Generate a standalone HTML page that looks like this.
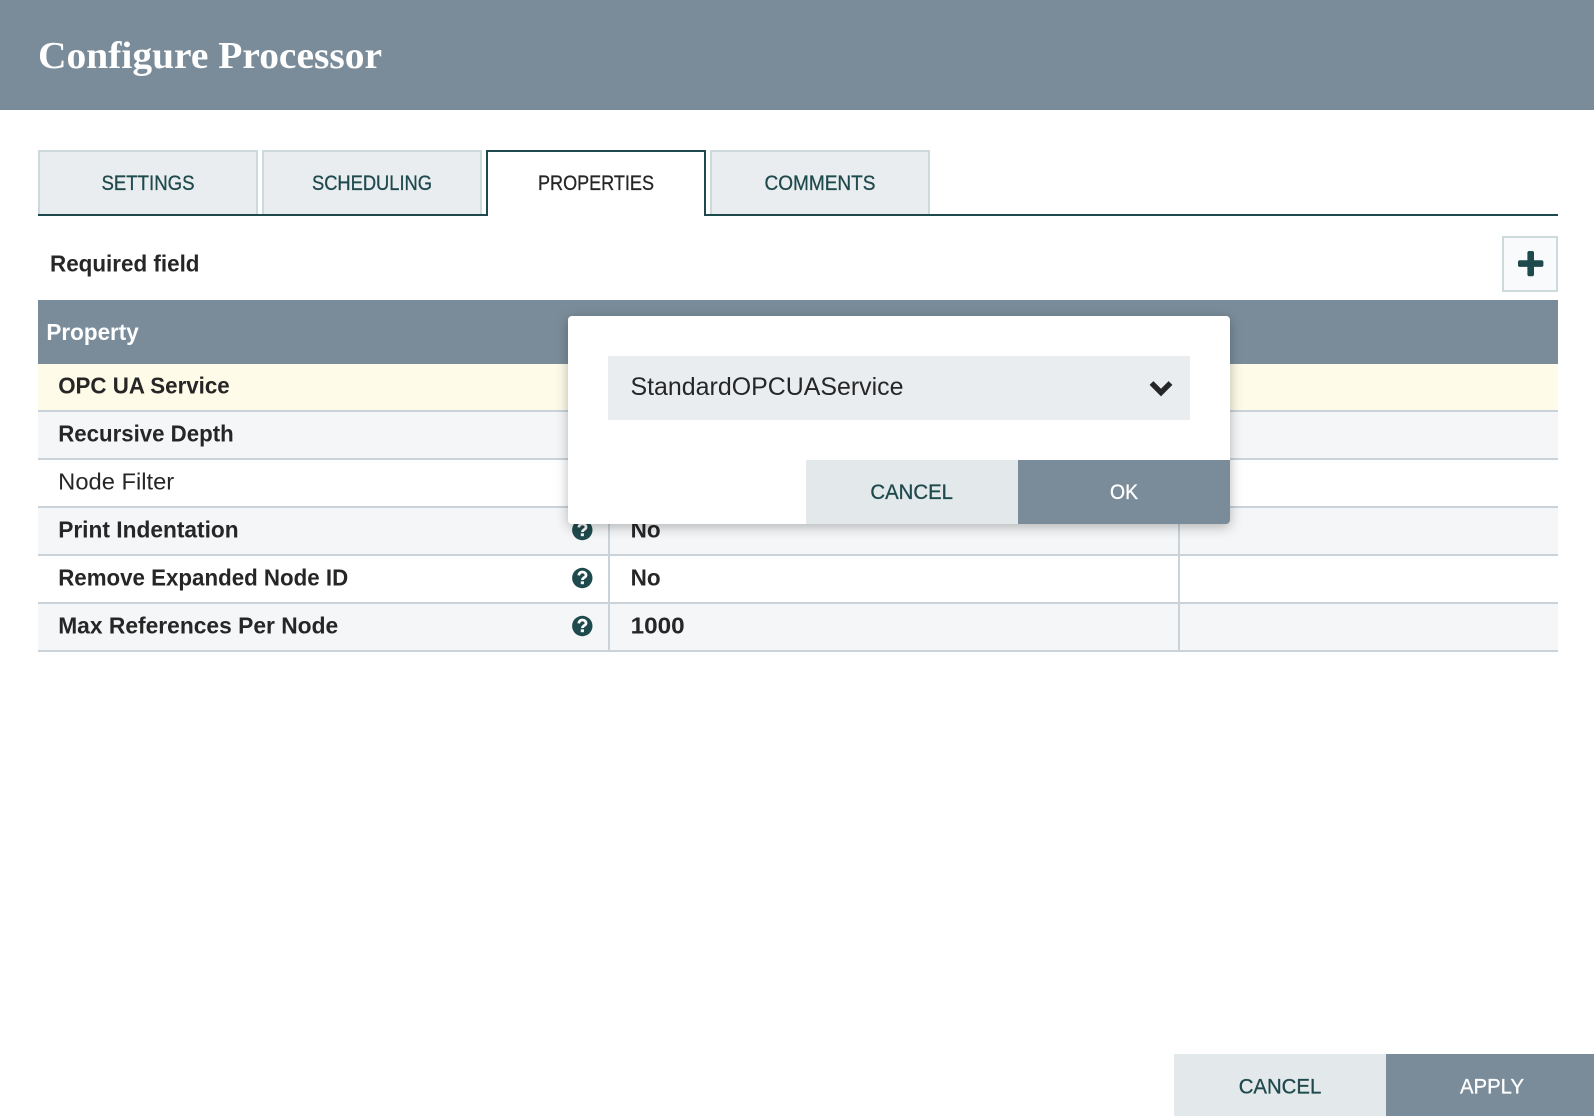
<!DOCTYPE html>
<html lang="en">
<head>
<meta charset="utf-8">
<title>Configure Processor</title>
<style>
html,body{margin:0;padding:0;width:1594px;height:1116px;background:#fff;overflow:hidden}
svg{display:block}
text{font-family:"Liberation Sans",Arial,sans-serif;fill:#262626}
.b{font-weight:bold;font-size:23px}
.r{font-size:23px}
.t{font-size:21px;fill:#1f4a4d;stroke:#1f4a4d;stroke-width:.3px}
.d{font-size:21px;stroke:#262626;stroke-width:.3px}
.w{fill:#fff}
.l{font-size:21px;stroke:#fff;stroke-width:.3px}
</style>
</head>
<body>
<svg width="1594" height="1116" viewBox="0 0 1594 1116" xmlns="http://www.w3.org/2000/svg">
<defs>
<filter id="sh" x="-10%" y="-15%" width="120%" height="135%">
<feDropShadow dx="0" dy="3" stdDeviation="6" flood-color="#000" flood-opacity="0.28"/>
</filter>
</defs>
<rect width="1594" height="1116" fill="#fff"/>
<rect width="1594" height="110" fill="#7a8c99"/>
<text x="38" y="68" class="w" style="font-family:'Liberation Serif',serif;font-weight:bold;font-size:38px" textLength="344" lengthAdjust="spacingAndGlyphs">Configure Processor</text>

<!-- tabs -->
<rect x="39" y="151" width="218" height="64" fill="#e9edf0" stroke="#ccdadb" stroke-width="2"/>
<rect x="263" y="151" width="218" height="64" fill="#e9edf0" stroke="#ccdadb" stroke-width="2"/>
<rect x="711" y="151" width="218" height="64" fill="#e9edf0" stroke="#ccdadb" stroke-width="2"/>
<rect x="38" y="214" width="450" height="2" fill="#1f4a4d"/>
<rect x="704" y="214" width="854" height="2" fill="#1f4a4d"/>
<path d="M487 216V151H705V216" fill="#fff" stroke="#1f4a4d" stroke-width="2"/>
<text x="101.5" y="190" class="t" textLength="93" lengthAdjust="spacingAndGlyphs">SETTINGS</text>
<text x="312" y="190" class="t" textLength="120" lengthAdjust="spacingAndGlyphs">SCHEDULING</text>
<text x="538" y="190" class="d" textLength="116" lengthAdjust="spacingAndGlyphs">PROPERTIES</text>
<text x="764.5" y="190" class="t" textLength="111" lengthAdjust="spacingAndGlyphs">COMMENTS</text>

<text x="50" y="271.5" class="b" textLength="149.5" lengthAdjust="spacingAndGlyphs">Required field</text>

<!-- add button -->
<rect x="1503" y="237" width="54" height="54" fill="#f9fafb" stroke="#ccdadb" stroke-width="2"/>
<rect x="1518" y="260.3" width="25.4" height="6.6" rx="1.8" fill="#1f4a4d"/>
<rect x="1527.4" y="251" width="6.6" height="25.2" rx="1.8" fill="#1f4a4d"/>

<!-- table -->
<rect x="38" y="300" width="1520" height="64" fill="#7a8c99"/>
<text x="46.4" y="340" class="b w" textLength="92.4" lengthAdjust="spacingAndGlyphs">Property</text>

<rect x="38" y="364" width="1520" height="46" fill="#fefbe8"/>
<rect x="38" y="412" width="1520" height="46" fill="#f4f6f8"/>
<rect x="38" y="508" width="1520" height="46" fill="#f4f6f8"/>
<rect x="38" y="604" width="1520" height="46" fill="#f4f6f8"/>
<g fill="#c9d3d9">
<rect x="38" y="410" width="1520" height="2"/>
<rect x="38" y="458" width="1520" height="2"/>
<rect x="38" y="506" width="1520" height="2"/>
<rect x="38" y="554" width="1520" height="2"/>
<rect x="38" y="602" width="1520" height="2"/>
<rect x="38" y="650" width="1520" height="2"/>
<rect x="608" y="508" width="2" height="142"/>
<rect x="1178" y="508" width="2" height="142"/>
</g>

<text x="58.2" y="393.5" class="b" textLength="171.5" lengthAdjust="spacingAndGlyphs">OPC UA Service</text>
<text x="58.2" y="441.5" class="b" textLength="175.5" lengthAdjust="spacingAndGlyphs">Recursive Depth</text>
<text x="58.2" y="489.5" class="r" textLength="116" lengthAdjust="spacingAndGlyphs">Node Filter</text>
<text x="58.2" y="537.5" class="b" textLength="180.5" lengthAdjust="spacingAndGlyphs">Print Indentation</text>
<text x="58.2" y="585.5" class="b" textLength="290" lengthAdjust="spacingAndGlyphs">Remove Expanded Node ID</text>
<text x="58.2" y="633.5" class="b" textLength="280" lengthAdjust="spacingAndGlyphs">Max References Per Node</text>

<text x="630.6" y="537.5" class="b" textLength="30" lengthAdjust="spacingAndGlyphs">No</text>
<text x="630.6" y="585.5" class="b" textLength="30" lengthAdjust="spacingAndGlyphs">No</text>
<text x="630.6" y="633.5" class="b" textLength="54" lengthAdjust="spacingAndGlyphs">1000</text>

<!-- help icons -->
<g>
<g transform="translate(582.3 530)">
<circle r="10.2" fill="#1f4a4d"/>
<path d="M-3.6 -2.6C-3.2 -5.2 -1.4 -6 .1 -6C2.2 -6 3.7 -4.6 3.7 -2.8C3.7 -.5 .2 -.5 .1 2" fill="none" stroke="#fff" stroke-width="2.8"/>
<rect x="-1.5" y="3.3" width="3.1" height="2.9" fill="#fff"/>
</g>
<g transform="translate(582.3 578)">
<circle r="10.2" fill="#1f4a4d"/>
<path d="M-3.6 -2.6C-3.2 -5.2 -1.4 -6 .1 -6C2.2 -6 3.7 -4.6 3.7 -2.8C3.7 -.5 .2 -.5 .1 2" fill="none" stroke="#fff" stroke-width="2.8"/>
<rect x="-1.5" y="3.3" width="3.1" height="2.9" fill="#fff"/>
</g>
<g transform="translate(582.3 626)">
<circle r="10.2" fill="#1f4a4d"/>
<path d="M-3.6 -2.6C-3.2 -5.2 -1.4 -6 .1 -6C2.2 -6 3.7 -4.6 3.7 -2.8C3.7 -.5 .2 -.5 .1 2" fill="none" stroke="#fff" stroke-width="2.8"/>
<rect x="-1.5" y="3.3" width="3.1" height="2.9" fill="#fff"/>
</g>
</g>

<!-- dialog -->
<rect x="568" y="316" width="662" height="208" rx="4" ry="4" fill="#fff" filter="url(#sh)"/>
<rect x="608" y="356" width="582" height="64" fill="#eaedf0"/>
<text x="630.5" y="395" style="font-size:25px" textLength="273" lengthAdjust="spacingAndGlyphs">StandardOPCUAService</text>
<path d="M1151.5 383L1161 392.5L1170.5 383" fill="none" stroke="#262626" stroke-width="5.4"/>
<rect x="806" y="460" width="212" height="64" fill="#e3e8eb"/>
<path d="M1018 460H1230V520a4 4 0 0 1 -4 4H1018Z" fill="#7a8c99"/>
<text x="870.4" y="499" class="t" textLength="82.6" lengthAdjust="spacingAndGlyphs">CANCEL</text>
<text x="1110" y="499" class="w l" textLength="28" lengthAdjust="spacingAndGlyphs">OK</text>

<!-- footer buttons -->
<rect x="1174" y="1054" width="212" height="62" fill="#e3e8eb"/>
<rect x="1386" y="1054" width="208" height="62" fill="#7a8c99"/>
<text x="1238.7" y="1093.5" class="t" textLength="82.6" lengthAdjust="spacingAndGlyphs">CANCEL</text>
<text x="1460" y="1093.5" class="w l" textLength="64" lengthAdjust="spacingAndGlyphs">APPLY</text>
</svg>
</body>
</html>
